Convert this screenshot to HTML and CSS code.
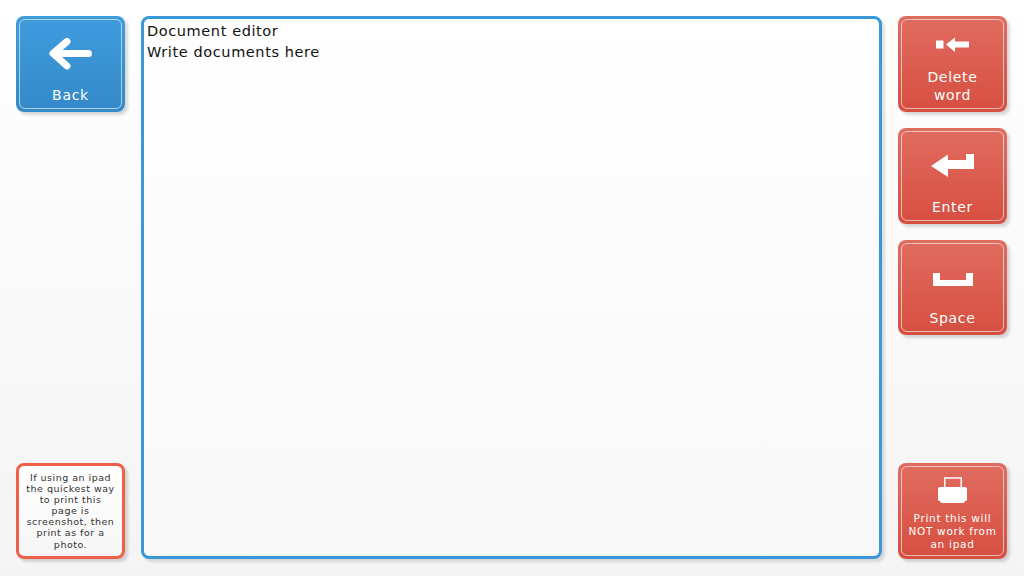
FILE: index.html
```html
<!DOCTYPE html>
<html lang="en">
<head>
  <meta charset="UTF-8">
  <meta name="viewport" content="width=device-width, initial-scale=1.0">
  <title>Document editor</title>
  <link rel="stylesheet" href="styles.css">
</head>

<body>
  <div class="page">
    <div class="side">
      <a class="btn btn-blue">
        <svg class="icon" width="44" height="32" viewBox="0 0 44 32">
          <path d="M18 3.500 L4 15.500 L18 28 M5 15.500 H39.500" fill="none" stroke="#fff" stroke-width="7" stroke-linecap="round" stroke-linejoin="round"/>
        </svg>
        <span class="label">Back</span>
      </a>
      <div class="note">If using an ipad<br>the quickest way<br>to print this<br>page is<br>screenshot, then<br>print as for a<br>photo.</div>
    </div>

    <div class="editor" contenteditable="true">
      <div>Document editor</div>
      <div>Write documents here</div>
    </div>

    <div class="side">
      <a class="btn btn-red">
        <svg class="icon" width="34" height="16" viewBox="0 0 34 16">
          <path d="M0 3.500 H7.500 V11.500 H0 Z M10 7.500 L19 0.500 V4.500 H33 V10.500 H19 V15 Z" fill="#fff"/>
        </svg>
        <span class="label">Delete<br>word</span>
      </a>
      <a class="btn btn-red">
        <svg class="icon" width="44" height="24" viewBox="0 0 44 24">
          <path d="M0 12 L17 0.500 V6 H35 V0 H43 V15 H17 V23 Z" fill="#fff"/>
        </svg>
        <span class="label">Enter</span>
      </a>
      <a class="btn btn-red btn-space">
        <svg class="icon icon-space" width="40" height="14" viewBox="0 0 40 14">
          <path d="M0 0 H7 V7 H33 V0 H40 V13 H0 Z" fill="#fff"/>
        </svg>
        <span class="label">Space</span>
      </a>
      <a class="btn btn-red">
        <svg class="icon" width="29" height="26" viewBox="0 0 29 26">
          <path d="M6.750 11 V1 H23.250 V11" fill="none" stroke="#fff" stroke-width="1.500"/>
          <path d="M2 10 H27 Q29 10 29 12 V23 Q29 24 27 24 L26 26 H3 L2 24 Q0 24 0 23 V12 Q0 10 2 10 Z" fill="#fff"/>
        </svg>
        <span class="label label-small">Print this will<br>NOT work from<br>an ipad</span>
      </a>
    </div>
  </div>
</body>

</html>
```

FILE: styles.css
```css
html,
body {
  height: 100%;
}

body {
  margin: 0;
  background: linear-gradient(#ffffff, #f4f4f4);
  font-family: 'DejaVu Sans', sans-serif;
  overflow: hidden;
}

.page {
  display: flex;
  gap: 16px;
  height: 576px;
  padding: 16px 17px 17px 16px;
  box-sizing: border-box;
}

.side {
  display: flex;
  flex-direction: column;
  gap: 16px;
  width: 109px;
  flex: none;
}

.side > :last-child {
  margin-top: auto;
}

.btn {
  position: relative;
  display: flex;
  flex-direction: column;
  align-items: center;
  height: 96px;
  box-sizing: border-box;
  padding: 5px 0 8px;
  border-radius: 8px;
  color: #fff;
  text-align: center;
  box-shadow: 3px 3px 3px rgba(0, 0, 0, 0.15);
}

/* inner light outline */
.btn::after {
  content: "";
  position: absolute;
  top: 3px;
  right: 3px;
  bottom: 3px;
  left: 3px;
  border: 1px solid rgba(255, 255, 255, 0.6);
  border-radius: 6px;
}

.btn-blue {
  background: linear-gradient(#3f9cdd, #3489c9);
}

.btn-red {
  background: linear-gradient(#e06c60, #d64f40);
}

.btn-space {
  height: 95px;
}

.icon {
  margin: auto 0;
}

.icon-space {
  padding-top: 6px;
}

.label {
  font-size: 14px;
  line-height: 18px;
  letter-spacing: 0.7px;
}

.label-small {
  font-size: 10.5px;
  line-height: 13px;
  letter-spacing: 0.7px;
}

.note {
  height: 96px;
  box-sizing: border-box;
  padding: 6px 0 0;
  border: 3px solid #ef5f4a;
  border-radius: 8px;
  background: linear-gradient(#ffffff, #f6f6f6);
  color: #333;
  font-size: 9.5px;
  line-height: 11.1px;
  letter-spacing: 0.5px;
  text-align: center;
  box-shadow: 3px 3px 3px rgba(0, 0, 0, 0.15);
}

.editor {
  flex: 1;
  box-sizing: border-box;
  padding: 1.5px 3px;
  border: 3px solid #3a97d8;
  border-radius: 8px;
  background: linear-gradient(#ffffff, #f8f8f8);
  color: #111;
  font-size: 14.5px;
  line-height: 21px;
  letter-spacing: 0.6px;
  box-shadow: 3px 3px 3px rgba(0, 0, 0, 0.12);
}
```
